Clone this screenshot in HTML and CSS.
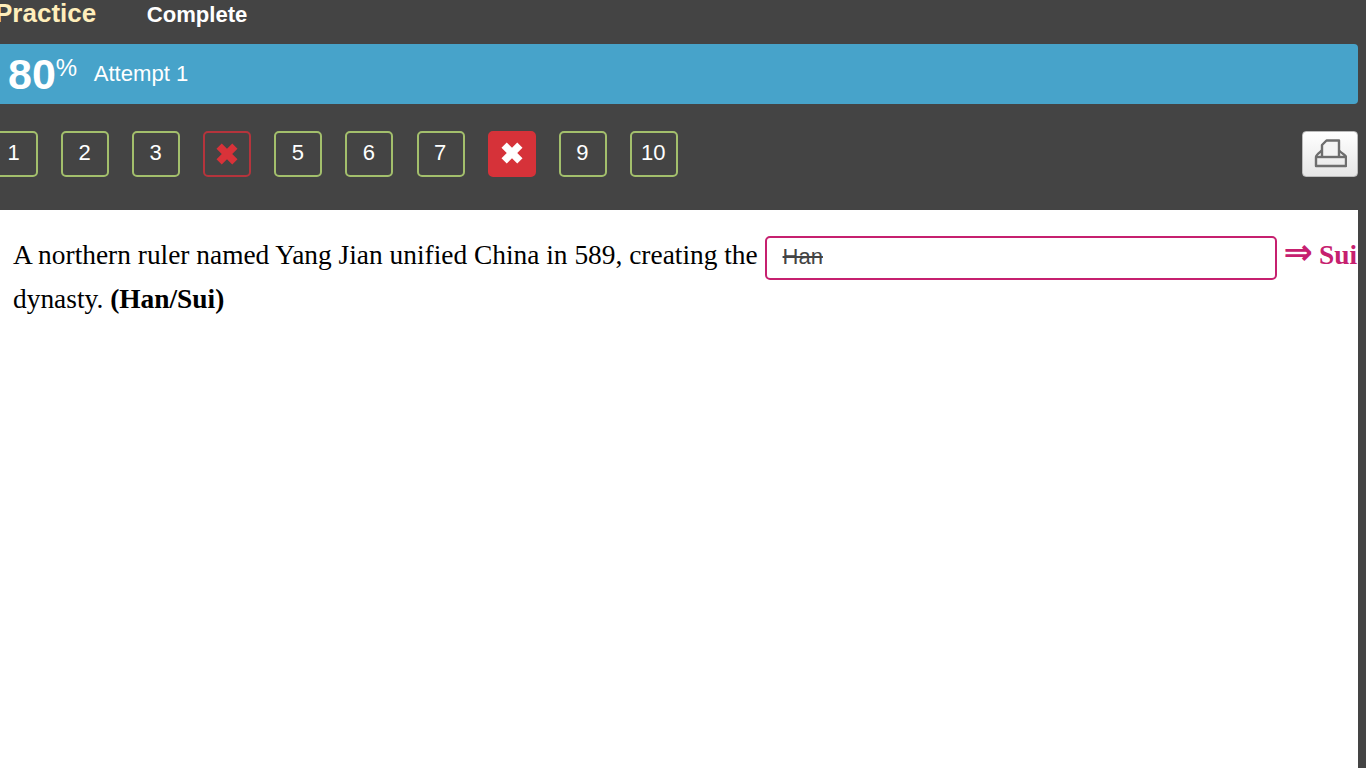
FILE: index.html
```html
<!DOCTYPE html>
<html lang="en">
<head>
<meta charset="utf-8">
<title>Practice</title>
<link rel="stylesheet" href="styles.css">
</head>
<body>
<div class="page">
  <nav class="tabs">
    <span class="tab-active">Practice</span>
    <span class="tab">Complete</span>
  </nav>
  <div class="score-bar">
    <span class="score">80</span><span class="percent">%</span>
    <span class="attempt">Attempt 1</span>
  </div>
  <div class="toolbar">
    <div class="questions">
      <span class="q">1</span>
      <span class="q">2</span>
      <span class="q">3</span>
      <span class="q q-wrong"><svg class="cross" viewBox="0 0 24 24"><path d="M5 8.5 8.5 5 12 8.500 15.500 5 19 8.500 15.500 12 19 15.500 15.500 19 12 15.500 8.500 19 5 15.500 8.500 12z"/></svg></span>
      <span class="q">5</span>
      <span class="q">6</span>
      <span class="q">7</span>
      <span class="q q-current"><svg class="cross" viewBox="0 0 24 24"><path d="M5 8.5 8.5 5 12 8.500 15.500 5 19 8.500 15.500 12 19 15.500 15.500 19 12 15.500 8.500 19 5 15.500 8.500 12z"/></svg></span>
      <span class="q">9</span>
      <span class="q">10</span>
    </div>
    <button class="print" aria-label="Print">
      <svg class="print-icon" viewBox="0 0 34 30"><path d="M3 18C3 16 4 15.500 9 11.500H26C30 15.500 33 16 33 18V27H3Z"/><path class="paper" d="M9 18V6L13.500 1.500H26V18"/><path d="M3 18H33"/></svg>
    </button>
  </div>
  <main class="content">
    <p class="question">A northern ruler named Yang Jian unified China in 589, creating the <span class="answer"><s>Han</s></span> <span class="correction"><span class="arrow">⇒</span> Sui</span> dynasty. <b>(Han/Sui)</b></p>
  </main>
</div>
</body>
</html>
```
FILE: styles.css
```css
html, body {
  margin: 0;
  height: 100%;
  overflow: hidden;
  background: #444444;
}
.page {
  width: 1358px;
  height: 768px;
  display: flex;
  flex-direction: column;
  font-family: "Liberation Sans", Arial, sans-serif;
  color: #fff;
}
.tabs {
  height: 44px;
  flex: none;
  display: flex;
  align-items: flex-start;
  gap: 50.5px;
  margin-left: -5px;
}
.tab-active {
  font-size: 26px;
  line-height: 26px;
  font-weight: 700;
  color: #ffeebb;
}
.tab {
  font-size: 22.1px;
  line-height: 30px;
  font-weight: 700;
}
.score-bar {
  height: 60px;
  flex: none;
  display: flex;
  align-items: flex-start;
  background: #47a3ca;
  border-radius: 0 4px 4px 0;
  padding-left: 8px;
}
.score {
  font-size: 43px;
  line-height: 60px;
  font-weight: 700;
}
.percent {
  font-size: 24px;
  line-height: 48px;
}
.attempt {
  font-size: 22.1px;
  line-height: 60px;
  margin-left: 16.5px;
}
.toolbar {
  height: 106px;
  flex: none;
  display: flex;
  justify-content: space-between;
  align-items: flex-start;
  padding-top: 27px;
  box-sizing: border-box;
}
.questions {
  display: flex;
  gap: 23.1px;
  margin-left: -10px;
}
.q {
  width: 48px;
  height: 46px;
  box-sizing: border-box;
  border: 2px solid #a3bf6c;
  border-radius: 5px;
  display: flex;
  align-items: center;
  justify-content: center;
  font-size: 22px;
  padding: 0 1px 3px 0;
}
.q-wrong {
  border-color: #b5343c;
  padding: 0;
}
.q-wrong .cross { fill: #d93239; }
.q-current {
  background: #d63239;
  border-color: #d63239;
  padding: 0 0 2px;
}
.q-current .cross { fill: #fff; }
.cross {
  width: 36px;
  height: 36px;
  display: block;
}
.print {
  width: 56px;
  height: 46px;
  padding: 0;
  border: 1px solid #bbb;
  border-radius: 4px;
  background: linear-gradient(#ffffff, #e6e6e6);
  display: flex;
  align-items: center;
  justify-content: center;
}
.print-icon {
  width: 34px;
  height: 30px;
  fill: none;
  stroke: #6e6e6e;
  stroke-width: 2.4;
  stroke-linejoin: round;
}
.paper {
  fill: #f4f4f4;
}
.content {
  flex: 1;
  background: #fff;
  color: #000;
  overflow: hidden;
}
.question {
  margin: 0;
  padding: 23px 0 0 13px;
  font-family: "Liberation Serif", "Times New Roman", serif;
  font-size: 27.4px;
  line-height: 44px;
}
.answer {
  display: inline-block;
  width: 512px;
  height: 44px;
  box-sizing: border-box;
  vertical-align: top;
  margin: 3px 0 -3px 0;
  padding-left: 16px;
  border: 2px solid #c6206f;
  border-radius: 5px;
  background: #fff;
  font-family: "Liberation Sans", Arial, sans-serif;
  font-size: 22px;
  line-height: 37px;
  color: #444;
}
.correction {
  font-weight: 700;
  color: #c6206f;
}
.arrow {
  font-family: "DejaVu Sans", sans-serif;
  font-size: 35px;
  line-height: 1;
  font-weight: 700;
  margin-right: -0.5px;
}
```
